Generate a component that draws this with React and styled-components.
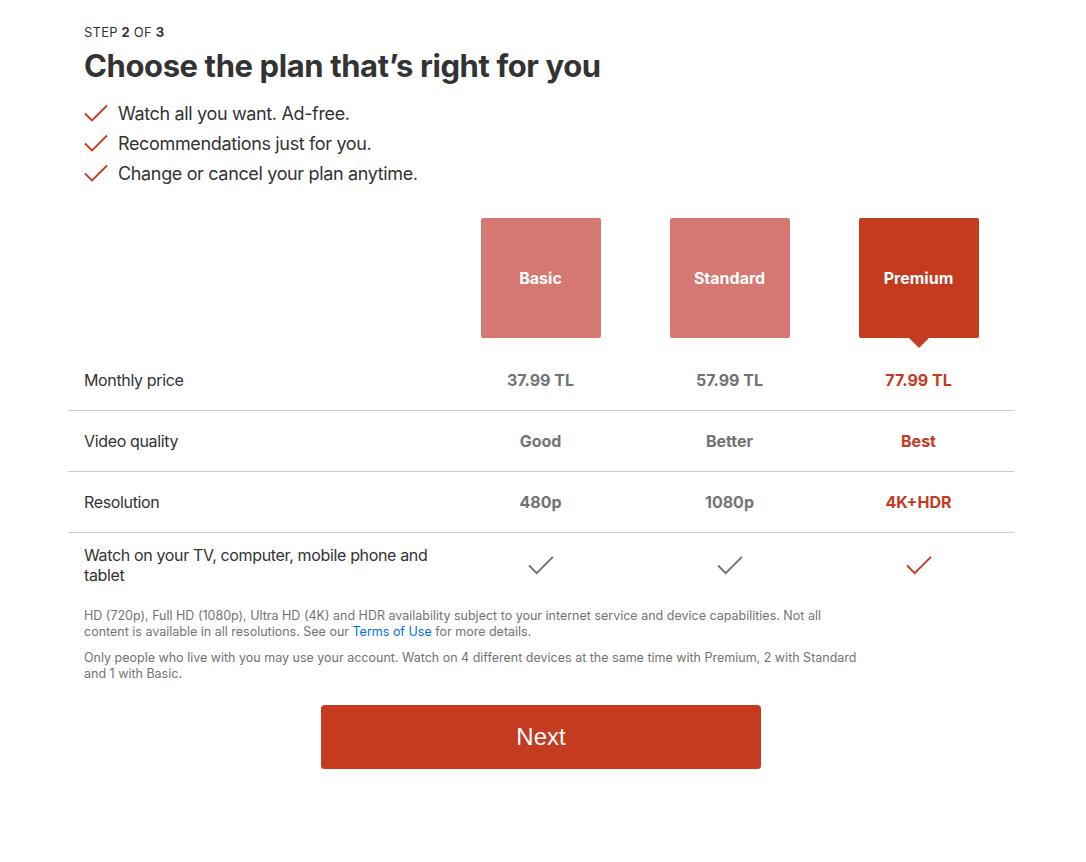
import styled, { createGlobalStyle } from "styled-components";

const GlobalStyle = createGlobalStyle`
  body {
    margin: 0;
    background: #ffffff;
    font-family: Inter, "Noto Sans", Arial, sans-serif;
    color: #333333;
  }
`;

const Page = styled.div`
  width: 946px;
  margin-left: 68px;
  padding-top: 24px;
`;

const Header = styled.div`
  padding: 0 16px;
`;

const StepText = styled.div`
  font-size: 13px;
  letter-spacing: 0.2px;
  text-transform: uppercase;
  line-height: 16px;
  color: #333;

  b {
    font-weight: 700;
  }
`;

const Title = styled.h1`
  margin: 6px 0 12px;
  font-size: 31px;
  font-weight: 700;
  letter-spacing: -0.4px;
  line-height: 40px;
  color: #333;
`;

const CheckList = styled.ul`
  list-style: none;
  margin: 0;
  padding: 0;
`;

const CheckItem = styled.li`
  display: flex;
  align-items: center;
  gap: 10px;
  height: 30px;
  font-size: 18px;
  letter-spacing: -0.35px;
  color: #333;
`;

const Table = styled.div`
  margin-top: 30px;
`;

const Row = styled.div`
  display: grid;
  grid-template-columns: 378px repeat(3, 189px);
  align-items: center;
  min-height: ${(p) => p.$height || 60}px;
  border-bottom: ${(p) => (p.$last ? "none" : "1px solid #cccccc")};
`;

const Label = styled.div`
  padding: 0 16px;
  font-size: 16px;
  letter-spacing: -0.35px;
  line-height: 20px;
  color: #333;
`;

const Value = styled.div`
  text-align: center;
  font-size: 16px;
  font-weight: 700;
  color: ${(p) => (p.$selected ? "#c43b1f" : "#737373")};
`;

const PlanCell = styled.div`
  display: flex;
  justify-content: center;
  padding-bottom: 12px;
`;

const PlanBox = styled.div`
  position: relative;
  width: 120px;
  height: 120px;
  border-radius: 2px;
  display: flex;
  align-items: center;
  justify-content: center;
  background: ${(p) => (p.$selected ? "#c43b1f" : "#d57872")};
  color: #ffffff;
  font-size: 16px;
  font-weight: 700;

  &::after {
    content: "";
    display: ${(p) => (p.$selected ? "block" : "none")};
    position: absolute;
    left: 50%;
    top: 100%;
    transform: translateX(-50%);
    border-left: 10px solid transparent;
    border-right: 10px solid transparent;
    border-top: 10px solid #c43b1f;
  }
`;

const CheckCell = styled.div`
  display: flex;
  justify-content: center;
`;

const Notes = styled.div`
  padding: 11px 16px 0;
  max-width: 775px;
`;

const Note = styled.p`
  margin: 0 0 10px;
  font-size: 12.5px;
  line-height: 16px;
  color: #737373;

  a {
    color: #0071eb;
    text-decoration: none;
  }
`;

const ButtonWrap = styled.div`
  display: flex;
  justify-content: center;
  padding-top: 13px;
`;

const NextButton = styled.button`
  width: 440px;
  height: 64px;
  border: none;
  border-radius: 4px;
  background: #c43b1f;
  color: #ffffff;
  font-family: Arial, "Liberation Sans", sans-serif;
  font-size: 24px;
  box-shadow: 0 1px 0 rgba(0, 0, 0, 0.25);
  cursor: pointer;
`;

function Check({ color = "#c43b1f", size = 24 }) {
  return (
    <svg width={size} height={size} viewBox="0 0 24 24" fill="none">
      <path
        d="M1 12.5 L8 19.5 L23 4.5"
        stroke={color}
        strokeWidth="1.8"
        strokeLinejoin="miter"
      />
    </svg>
  );
}

const plans = [
  { name: "Basic", price: "37.99 TL", quality: "Good", res: "480p" },
  { name: "Standard", price: "57.99 TL", quality: "Better", res: "1080p" },
  { name: "Premium", price: "77.99 TL", quality: "Best", res: "4K+HDR", selected: true },
];

export default function App() {
  return (
    <>
      <GlobalStyle />
      <Page>
        <Header>
          <StepText>
            Step <b>2</b> of <b>3</b>
          </StepText>
          <Title>Choose the plan that’s right for you</Title>
          <CheckList>
            <CheckItem>
              <Check />
              Watch all you want. Ad-free.
            </CheckItem>
            <CheckItem>
              <Check />
              Recommendations just for you.
            </CheckItem>
            <CheckItem>
              <Check />
              Change or cancel your plan anytime.
            </CheckItem>
          </CheckList>
        </Header>

        <Table>
          <Row $last $height={132}>
            <div />
            {plans.map((p) => (
              <PlanCell key={p.name}>
                <PlanBox $selected={p.selected}>{p.name}</PlanBox>
              </PlanCell>
            ))}
          </Row>
          <Row>
            <Label>Monthly price</Label>
            {plans.map((p) => (
              <Value key={p.name} $selected={p.selected}>
                {p.price}
              </Value>
            ))}
          </Row>
          <Row>
            <Label>Video quality</Label>
            {plans.map((p) => (
              <Value key={p.name} $selected={p.selected}>
                {p.quality}
              </Value>
            ))}
          </Row>
          <Row>
            <Label>Resolution</Label>
            {plans.map((p) => (
              <Value key={p.name} $selected={p.selected}>
                {p.res}
              </Value>
            ))}
          </Row>
          <Row $last $height={64}>
            <Label>Watch on your TV, computer, mobile phone and tablet</Label>
            {plans.map((p) => (
              <CheckCell key={p.name}>
                <Check color={p.selected ? "#c43b1f" : "#737373"} size={26} />
              </CheckCell>
            ))}
          </Row>
        </Table>

        <Notes>
          <Note>
            HD (720p), Full HD (1080p), Ultra HD (4K) and HDR availability subject to
            your internet service and device capabilities. Not all content is available
            in all resolutions. See our <a href="#terms">Terms of Use</a> for more
            details.
          </Note>
          <Note>
            Only people who live with you may use your account. Watch on 4 different
            devices at the same time with Premium, 2 with Standard and 1 with Basic.
          </Note>
        </Notes>

        <ButtonWrap>
          <NextButton>Next</NextButton>
        </ButtonWrap>
      </Page>
    </>
  );
}
